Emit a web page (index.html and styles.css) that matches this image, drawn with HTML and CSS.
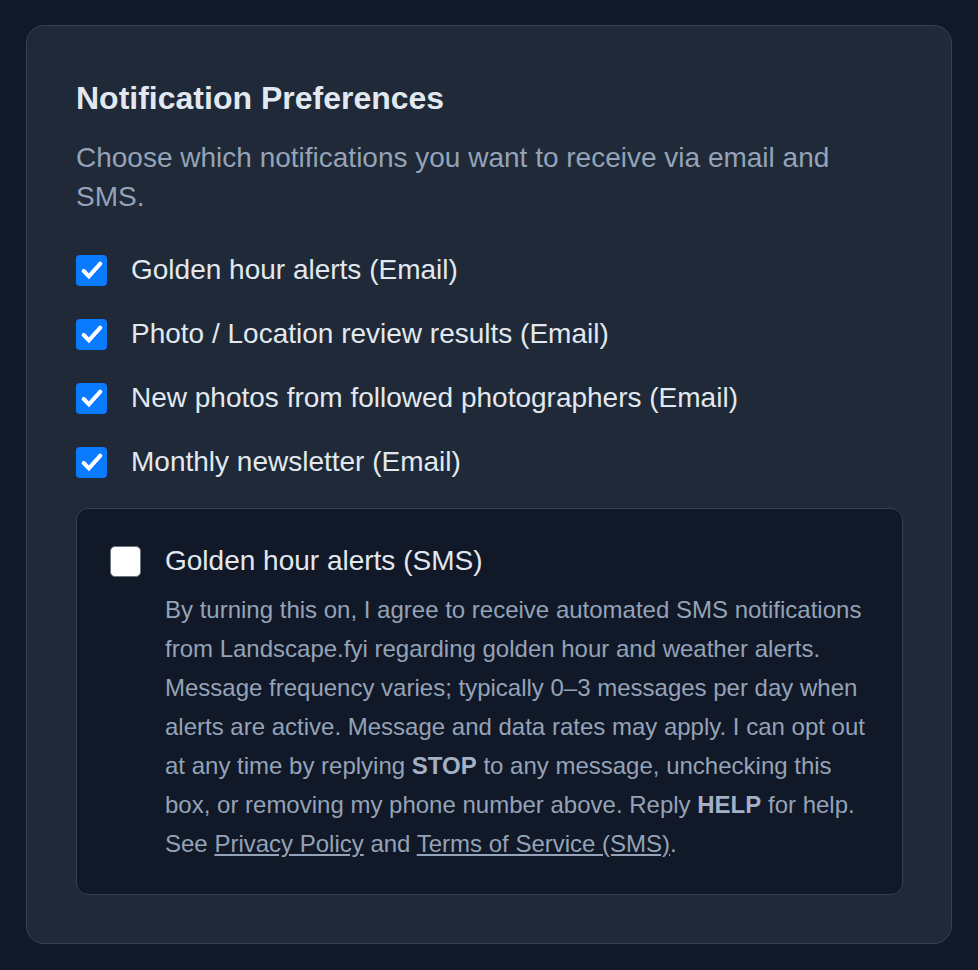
FILE: index.html
```html
<!DOCTYPE html>
<html lang="en">
<head>
<meta charset="utf-8">
<title>Notification Preferences</title>
<link rel="stylesheet" href="styles.css">
</head>
<body>
<section class="card">
  <h2 class="title">Notification Preferences</h2>
  <p class="subtitle">Choose which notifications you want to receive via email and SMS.</p>
  <div class="list">
    <label class="row">
      <span class="box checked"><svg viewBox="0 0 16 16" width="26" height="26"><path d="M2.9 8.6 L6.1 11.9 L13.1 4.1" fill="none" stroke="#fff" stroke-width="2.5" stroke-linecap="round" stroke-linejoin="miter"/></svg></span>
      <span class="label">Golden hour alerts (Email)</span>
    </label>
    <label class="row">
      <span class="box checked"><svg viewBox="0 0 16 16" width="26" height="26"><path d="M2.9 8.6 L6.1 11.9 L13.1 4.1" fill="none" stroke="#fff" stroke-width="2.5" stroke-linecap="round" stroke-linejoin="miter"/></svg></span>
      <span class="label">Photo / Location review results (Email)</span>
    </label>
    <label class="row">
      <span class="box checked"><svg viewBox="0 0 16 16" width="26" height="26"><path d="M2.9 8.6 L6.1 11.9 L13.1 4.1" fill="none" stroke="#fff" stroke-width="2.5" stroke-linecap="round" stroke-linejoin="miter"/></svg></span>
      <span class="label">New photos from followed photographers (Email)</span>
    </label>
    <label class="row">
      <span class="box checked"><svg viewBox="0 0 16 16" width="26" height="26"><path d="M2.9 8.6 L6.1 11.9 L13.1 4.1" fill="none" stroke="#fff" stroke-width="2.5" stroke-linecap="round" stroke-linejoin="miter"/></svg></span>
      <span class="label">Monthly newsletter (Email)</span>
    </label>
    <div class="sms">
      <label class="row">
        <span class="box empty"></span>
        <span class="label">Golden hour alerts (SMS)</span>
      </label>
      <p class="consent">By turning this on, I agree to receive automated SMS notifications from Landscape.fyi regarding golden hour and weather alerts. Message frequency varies; typically 0–3 messages per day when alerts are active. Message and data rates may apply. I can opt out at any time by replying <strong>STOP</strong> to any message, unchecking this box, or removing my phone number above. Reply <strong>HELP</strong> for help. See <a href="#">Privacy Policy</a> and <a href="#">Terms of Service (SMS)</a>.</p>
    </div>
  </div>
</section>
</body>
</html>
```

FILE: styles.css
```css
* { box-sizing: border-box; }
html, body { margin: 0; padding: 0; }
body {
  background: #111827;
  font-family: "Liberation Sans", Arial, sans-serif;
  padding: 25px 26px 27px 26px;
}
.card {
  width: 926px;
  background: #1f2937;
  border: 1px solid #374151;
  border-radius: 18px;
  padding: 48px 48px 48px 49px;
}
.title {
  margin: 0;
  font-size: 32px;
  line-height: 48px;
  font-weight: 700;
  color: #e2e8f0;
}
.subtitle {
  margin: 16px 0 0;
  font-size: 28px;
  line-height: 39px;
  color: #94a3b8;
}
.list {
  margin-top: 36px;
  display: flex;
  flex-direction: column;
  gap: 28px;
}
.row {
  display: flex;
  align-items: center;
  gap: 24px;
  height: 36px;
}
.box {
  flex: none;
  width: 31px;
  height: 31px;
  border-radius: 4px;
  display: flex;
  align-items: center;
  justify-content: center;
}
.box.checked { background: #0a7aff; }
.box.empty {
  width: 31px;
  height: 31px;
  background: #ffffff;
  border: 1.5px solid #6b7280;
  border-radius: 5px;
}
.label {
  font-size: 28px;
  line-height: 36px;
  color: #e2e8f0;
  white-space: nowrap;
}
.sms {
  background: #111827;
  border: 1px solid #374151;
  border-radius: 12px;
  padding: 34px 32px 31px 33px;
}
.consent {
  margin: 11px 0 0 55px;
  font-size: 24px;
  line-height: 39px;
  color: #94a3b8;
}
.consent strong { color: #a3b1c6; font-weight: 700; }
.consent a { color: #94a3b8; text-decoration: underline; }
```
